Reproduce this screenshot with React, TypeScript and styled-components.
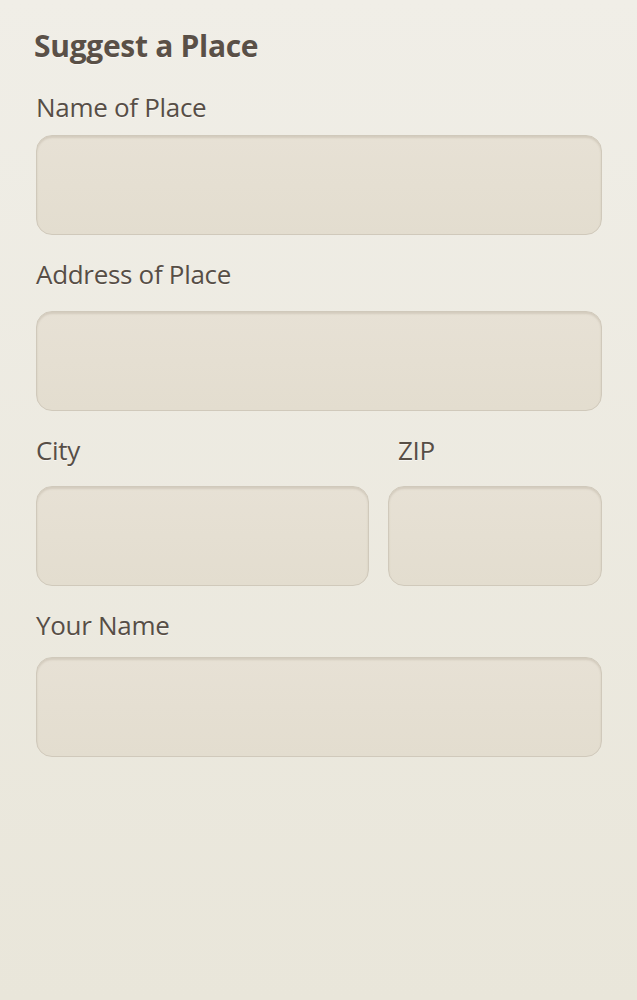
import React from "react";
import styled, { createGlobalStyle } from "styled-components";

const Global = createGlobalStyle`
  html, body { margin: 0; padding: 0; }
  body {
    min-height: 1000px;
    background: linear-gradient(180deg, #f0eee7 0%, #e9e6da 100%);
    font-family: "Open Sans", "Noto Sans", sans-serif;
  }
`;

const Page = styled.form`
  padding: 26px 35px 0 36px;
  display: flex;
  flex-direction: column;
`;

const Title = styled.h1`
  margin: 0 0 24px -2px;
  font-size: 30px;
  font-weight: 700;
  color: #5a5047;
  letter-spacing: -0.3px;
  line-height: 40px;
  text-shadow: 0 1px 0 rgba(255, 255, 255, 0.6);
`;

const Field = styled.div`
  display: flex;
  flex-direction: column;
  margin-bottom: 22px;
  min-width: 0;
`;

const Label = styled.label<{ $indent?: number; $gap?: number }>`
  font-size: 26px;
  line-height: 34px;
  color: #574e46;
  margin-bottom: ${(p) => p.$gap ?? 16}px;
  padding-left: ${(p) => p.$indent ?? 0}px;
  letter-spacing: -0.3px;
  text-shadow: 0 1px 0 rgba(255, 255, 255, 0.6);
`;

const Input = styled.input`
  box-sizing: border-box;
  width: 100%;
  height: 100px;
  border: 1px solid #d0c9bb;
  border-radius: 16px;
  background: linear-gradient(180deg, #e7e1d5 0%, #e3ddcf 100%);
  box-shadow: inset 0 2px 2px rgba(120, 105, 85, 0.18);
  font-family: inherit;
  font-size: 24px;
  padding: 0 16px;
  outline: none;
`;

const Row = styled.div`
  display: grid;
  grid-template-columns: 333fr 214fr;
  column-gap: 19px;
`;

export default function App() {
  return (
    <>
      <Global />
      <Page>
        <Title>Suggest a Place</Title>
        <Field>
          <Label $gap={11}>Name of Place</Label>
          <Input />
        </Field>
        <Field>
          <Label $gap={20}>Address of Place</Label>
          <Input />
        </Field>
        <Row>
          <Field>
            <Label $gap={19}>City</Label>
            <Input />
          </Field>
          <Field>
            <Label $gap={19} $indent={10}>
              ZIP
            </Label>
            <Input />
          </Field>
        </Row>
        <Field>
          <Label $gap={15}>Your Name</Label>
          <Input />
        </Field>
      </Page>
    </>
  );
}
